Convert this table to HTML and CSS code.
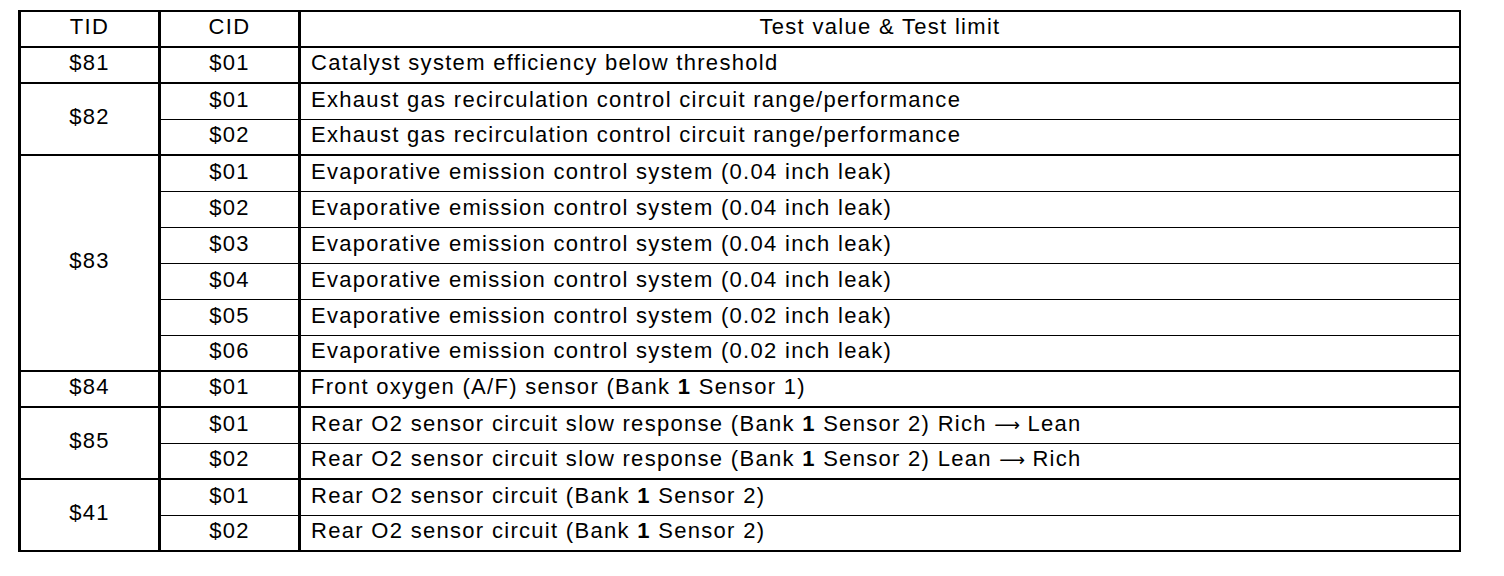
FILE: index.html
```html
<!DOCTYPE html>
<html>
<head>
<meta charset="utf-8">
<link rel="stylesheet" href="styles.css">
</head>
<body>
<table class="obd">
  <thead>
    <tr>
      <th class="tid">TID</th>
      <th class="cid">CID</th>
      <th class="desc-h">Test value &amp; Test limit</th>
    </tr>
  </thead>
  <tbody>
    <tr class="grp">
      <td class="tid">$81</td>
      <td class="cid">$01</td>
      <td class="desc">Catalyst system efficiency below threshold</td>
    </tr>
    <tr class="sub">
      <td class="tid gend" rowspan="2">$82</td>
      <td class="cid">$01</td>
      <td class="desc">Exhaust gas recirculation control circuit range/performance</td>
    </tr>
    <tr class="grp">
      <td class="cid">$02</td>
      <td class="desc">Exhaust gas recirculation control circuit range/performance</td>
    </tr>
    <tr class="sub">
      <td class="tid gend" rowspan="6">$83</td>
      <td class="cid">$01</td>
      <td class="desc">Evaporative emission control system (0.04 inch leak)</td>
    </tr>
    <tr class="sub">
      <td class="cid">$02</td>
      <td class="desc">Evaporative emission control system (0.04 inch leak)</td>
    </tr>
    <tr class="sub">
      <td class="cid">$03</td>
      <td class="desc">Evaporative emission control system (0.04 inch leak)</td>
    </tr>
    <tr class="sub">
      <td class="cid">$04</td>
      <td class="desc">Evaporative emission control system (0.04 inch leak)</td>
    </tr>
    <tr class="sub">
      <td class="cid">$05</td>
      <td class="desc">Evaporative emission control system (0.02 inch leak)</td>
    </tr>
    <tr class="grp">
      <td class="cid">$06</td>
      <td class="desc">Evaporative emission control system (0.02 inch leak)</td>
    </tr>
    <tr class="grp">
      <td class="tid">$84</td>
      <td class="cid">$01</td>
      <td class="desc">Front oxygen (A/F) sensor (Bank <b>1</b> Sensor 1)</td>
    </tr>
    <tr class="sub">
      <td class="tid gend" rowspan="2">$85</td>
      <td class="cid">$01</td>
      <td class="desc">Rear O2 sensor circuit slow response (Bank <b>1</b> Sensor 2) Rich <span class="arrow">&#x27F6;</span> Lean</td>
    </tr>
    <tr class="grp">
      <td class="cid">$02</td>
      <td class="desc">Rear O2 sensor circuit slow response (Bank <b>1</b> Sensor 2) Lean <span class="arrow">&#x27F6;</span> Rich</td>
    </tr>
    <tr class="sub">
      <td class="tid gend" rowspan="2">$41</td>
      <td class="cid">$01</td>
      <td class="desc">Rear O2 sensor circuit (Bank <b>1</b> Sensor 2)</td>
    </tr>
    <tr class="grp">
      <td class="cid">$02</td>
      <td class="desc">Rear O2 sensor circuit (Bank <b>1</b> Sensor 2)</td>
    </tr>
  </tbody>
</table>
</body>
</html>
```
FILE: styles.css
```css
html, body {
  background: #ffffff;
}
body {
  margin: 10px 0 0 18px;
  font-family: "Liberation Sans", Arial, sans-serif;
  color: #000000;
}
.obd {
  border-collapse: separate;
  border-spacing: 0;
  table-layout: fixed;
  width: 1443px;
  border-left: 3px solid #000;
  border-top: 2px solid #000;
  font-size: 22px;
  letter-spacing: 1.3px;
}
.obd tr {
  height: 36px;
}
.obd th,
.obd td {
  box-sizing: border-box;
  padding: 0 10px 4px 10px;
  font-weight: normal;
  vertical-align: middle;
  border-right: 3px solid #000;
  white-space: nowrap;
  line-height: 24px;
}
.obd th {
  border-bottom: 2px solid #000;
  text-align: center;
}
.obd .tid,
.obd .cid {
  width: 140px;
  text-align: center;
}
.obd .desc,
.obd .desc-h {
  border-right-width: 2px;
}
.obd .desc {
  text-align: left;
}
.obd tr.grp td {
  border-bottom: 2px solid #000;
}
.obd tr.sub td {
  border-bottom: 1px solid #000;
}
.obd tr.sub td.gend {
  border-bottom: 2px solid #000;
}
.obd b {
  font-weight: bold;
}
.obd .arrow {
  font-family: "DejaVu Sans", sans-serif;
  font-size: 18px;
  letter-spacing: 0;
  line-height: 0;
}
```
